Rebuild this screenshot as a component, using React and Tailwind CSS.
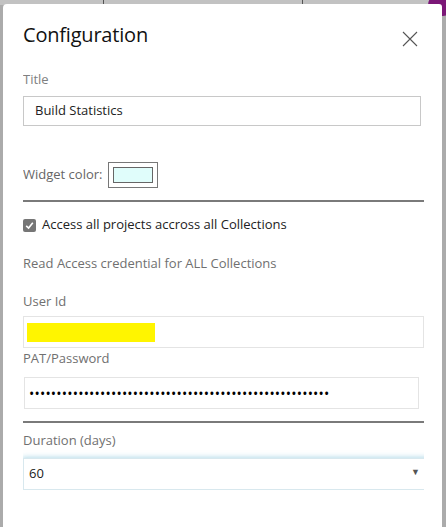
export default function App() {
  const font = { fontFamily: '"Open Sans", "Noto Sans", sans-serif' }
  return (
    <div
      className="relative w-[446px] h-[527px] overflow-hidden bg-[#ababab]"
      style={font}
    >
      {/* backdrop bits peeking above the dialog */}
      <div className="absolute left-0 top-0 w-full h-[5px] bg-[#c2c2c2]" />
      <div className="absolute left-[103px] top-0 w-px h-[5px] bg-[#555]" />
      <div className="absolute left-[302px] top-0 w-px h-[5px] bg-[#555]" />
      <div className="absolute left-[428px] top-[-6px] w-[26px] h-[22px] rounded-full bg-[#7b1777]" />

      <div className="relative ml-[3px] mr-[4px] mt-[4px] h-[600px] bg-white rounded-tl-[4px] rounded-tr-[3px]">
        <div className="flex items-center justify-between pl-[20px] pr-[24px] pt-[17px]">
          <h1 className="text-[20px] leading-[28px] font-medium text-[#111] tracking-[-0.2px]">
            Configuration
          </h1>
          <svg width="16" height="16" viewBox="0 0 16 16" className="mt-[8px]">
            <path d="M1 1 L15 15 M15 1 L1 15" stroke="#555" strokeWidth="1.1" fill="none" />
          </svg>
        </div>

        <div className="ml-[20px] w-[401px] overflow-hidden text-[13px]">
          <div className="mt-[21px] leading-[18px] text-[#808080]">Title</div>
          <div className="mt-[8px] w-[398px] h-[30px] border border-[#c8c8c8] flex items-center pl-[11px] text-[#222]">
            Build Statistics
          </div>

          <div className="mt-[36px] flex items-center h-[26px]">
            <span className="text-[#666]">Widget color:</span>
            <div className="ml-[5px] w-[50px] h-[26px] border border-[#777] flex items-center justify-center">
              <div className="w-[40px] h-[16px] border border-[#666] bg-[#e0fdfb]" />
            </div>
          </div>
          <div className="mt-[12px] h-[2px] bg-[#7a7a7a]" />

          <label className="mt-[14px] flex items-center h-[18px] text-[#222]">
            <span className="w-[13px] h-[13px] rounded-[2px] bg-[#767676] flex items-center justify-center">
              <svg width="9" height="9" viewBox="0 0 9 9">
                <path d="M1.2 4.8 L3.6 7 L7.8 1.8" stroke="#fff" strokeWidth="1.6" fill="none" />
              </svg>
            </span>
            <span className="ml-[6px]">Access all projects accross all Collections</span>
          </label>

          <div className="mt-[20px] leading-[18px] text-[#707070]">Read Access credential for ALL Collections</div>

          <div className="mt-[20px] leading-[18px] text-[#707070]">User Id</div>
          <div className="mt-[6px] w-[401px] h-[32px] border border-[#e4e4e4] flex items-center pl-[3px]">
            <div className="w-[128px] h-[19px] bg-[#fff500]" />
          </div>

          <div className="mt-[1px] leading-[18px] text-[#707070]">PAT/Password</div>
          <div className="mt-[10px] ml-[1px] w-[395px] h-[32px] border border-[#e4e4e4] flex items-center pl-[4px] text-[#000] text-[14px] tracking-[0.2px]">
            {'•'.repeat(55)}
          </div>

          <div className="mt-[12px] h-[2px] bg-[#7a7a7a]" />
          <div className="mt-[8px] leading-[18px] text-[#707070]">Duration (days)</div>
          <div className="mt-[9px] w-[420px] h-[32px] border border-[#d8e8ee] shadow-[0_0_5px_1px_rgba(120,190,215,0.55)] flex items-center pl-[5px] text-[#222] relative">
            60
            <span className="absolute left-[387px] top-[6px] text-[9px] text-[#555]">▼</span>
          </div>
        </div>
      </div>
    </div>
  )
}
